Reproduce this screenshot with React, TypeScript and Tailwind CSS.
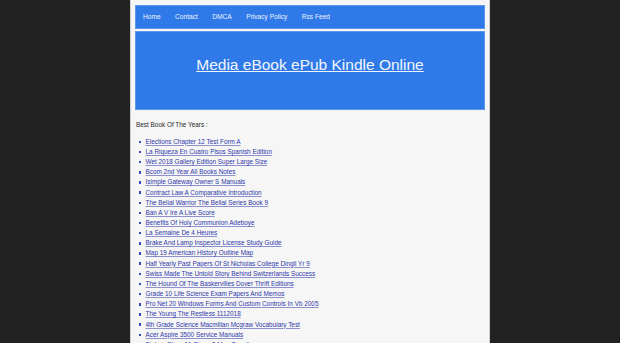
const menu = ["Home", "Contact", "DMCA", "Privacy Policy", "Rss Feed"]

const books = [
  "Elections Chapter 12 Test Form A",
  "La Riqueza En Cuatro Pisos Spanish Edition",
  "Wet 2018 Gallery Edition Super Large Size",
  "Bcom 2nd Year All Books Notes",
  "Isimple Gateway Owner S Manuals",
  "Contract Law A Comparative Introduction",
  "The Belial Warrior The Belial Series Book 9",
  "Ban A V Ire A Live Score",
  "Benefits Of Holy Communion Adeboye",
  "La Semaine De 4 Heures",
  "Brake And Lamp Inspector License Study Guide",
  "Map 19 American History Outline Map",
  "Half Yearly Past Papers Of St Nicholas College Dingli Yr 9",
  "Swiss Made The Untold Story Behind Switzerlands Success",
  "The Hound Of The Baskervilles Dover Thrift Editions",
  "Grade 10 Life Science Exam Papers And Memos",
  "Pro Net 20 Windows Forms And Custom Controls In Vb 2005",
  "The Young The Restless 1112018",
  "4th Grade Science Macmillan Mcgraw Vocabulary Test",
  "Acer Aspire 3500 Service Manuals",
  "Bishop Class 11 Chem 2 Mcq Questions",
]

export default function App() {
  return (
    <div className="h-[343px] overflow-hidden bg-[#222222] font-['Liberation_Sans',Arial,sans-serif]">
      <div className="mx-auto w-[360px] min-h-[343px] border-x border-[#cfcfcf] bg-[#f6f6f6] px-[4px] pt-[5px]">
        <nav className="flex h-[24px] items-center gap-[14.5px] border border-[#5c97ee] bg-[#2f7ae8] pl-[7px] text-[6.6px] text-[#eef3ff]">
          {menu.map((item) => (
            <a key={item} href="#">
              {item}
            </a>
          ))}
        </nav>
        <header className="mt-[2px] h-[79px] border border-[#5c97ee] bg-[#2f7ae8] pt-[21px] text-center">
          <a href="#" className="text-[15.5px] leading-[18px] text-[#f2f6ff] underline">
            Media eBook ePub Kindle Online
          </a>
        </header>
        <main className="pl-[1px] pt-[10px] text-[6.4px] leading-[10.15px]">
          <p className="text-[#2a2a2a]">Best Book Of The Years :</p>
          <ul className="mt-[6.6px]">
            {books.map((b) => (
              <li key={b} className="flex items-center">
                <span className="ml-[2.5px] mr-[4.5px] h-[2.5px] w-[2.5px] bg-[#3a48c0]" />
                <a href="#" className="text-[#2d36a8] underline decoration-[#8d92cc]">
                  {b}
                </a>
              </li>
            ))}
          </ul>
        </main>
      </div>
    </div>
  )
}
